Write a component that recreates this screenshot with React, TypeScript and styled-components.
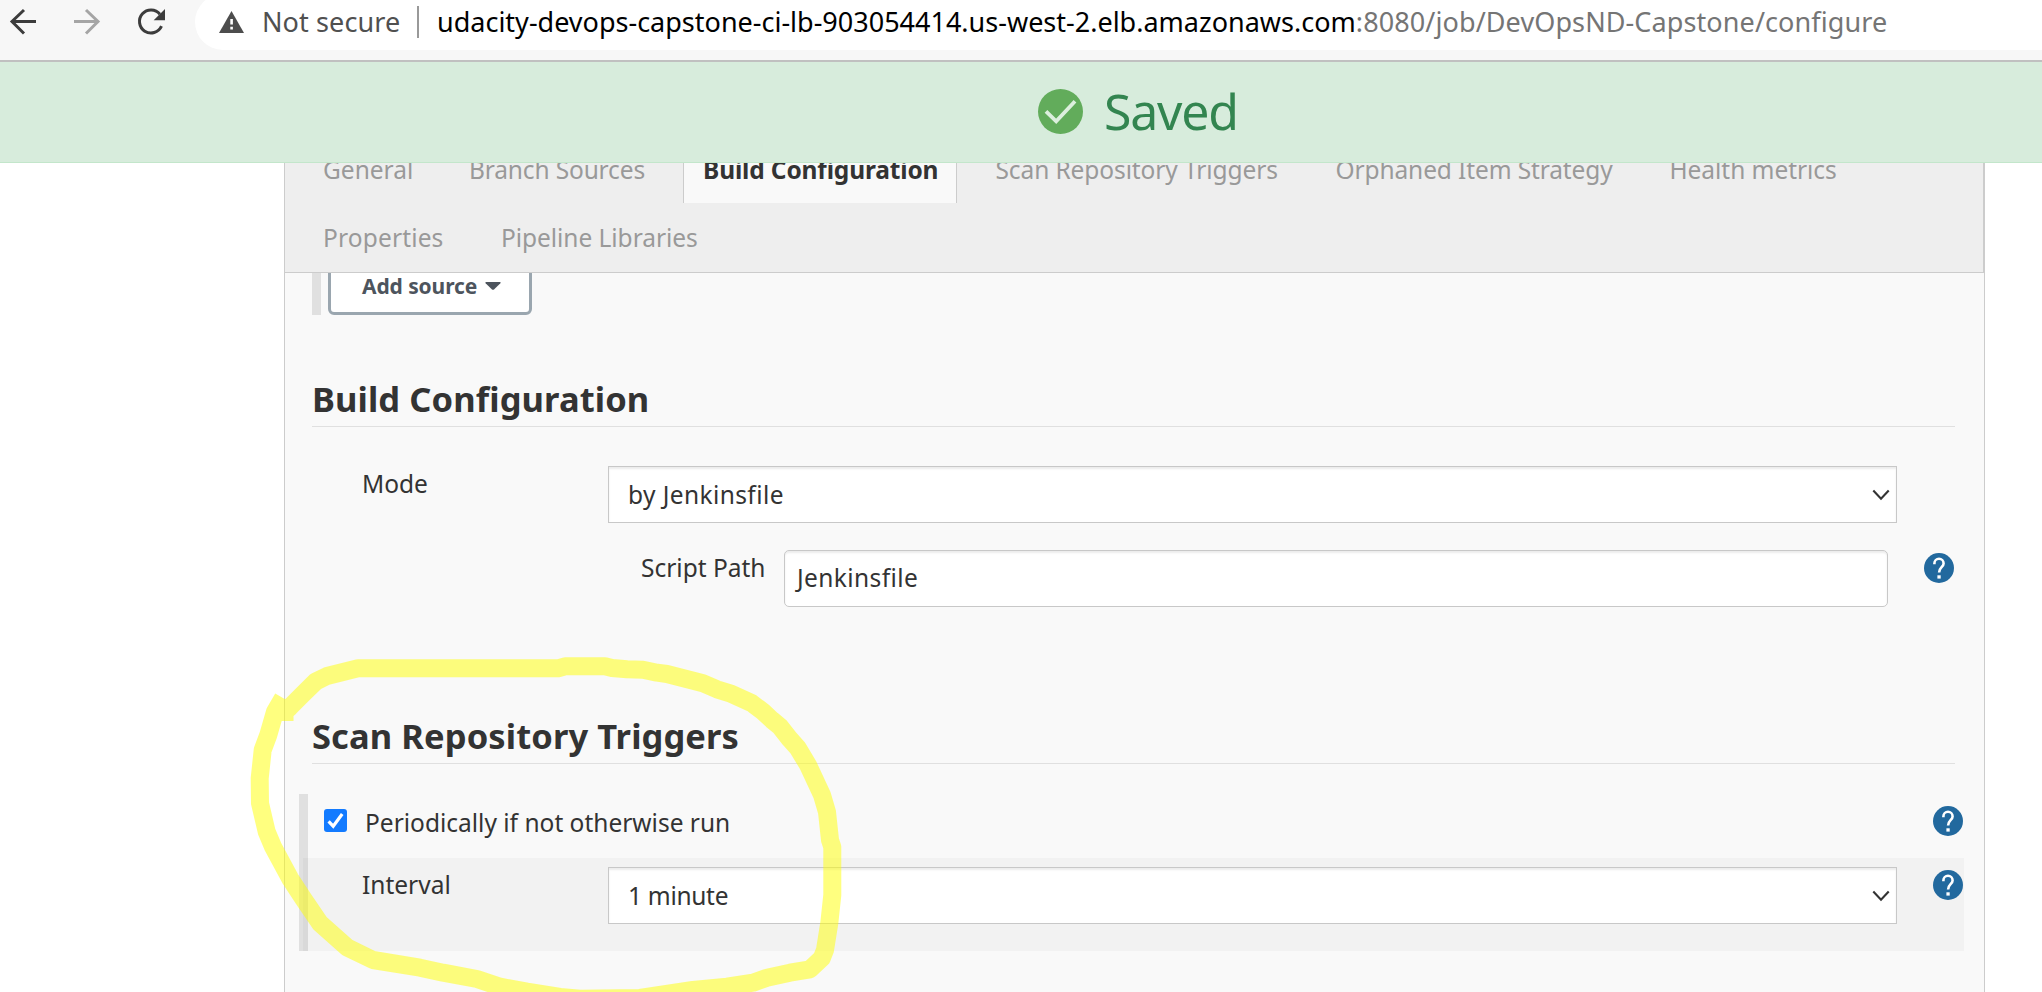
import React from "react";
import styled, { createGlobalStyle } from "styled-components";

const GlobalStyle = createGlobalStyle`
  *, *::before, *::after { box-sizing: border-box; }
  body {
    margin: 0;
    background: #fff;
    color: #333;
    font-family: "Noto Sans", "Open Sans", sans-serif;
    font-size: 24.5px;
    line-height: 30px;
    overflow: hidden;
  }
`;

const Page = styled.div`
  position: relative;
  display: flex;
  flex-direction: column;
  width: 2042px;
  height: 992px;
  overflow: hidden;
`;

/* Browser toolbar */

const Toolbar = styled.header`
  display: flex;
  flex: none;
  height: 62px;
  overflow: hidden;
  background: #f7f7f7;
  border-bottom: 2px solid #c0c0c0;
`;

const NavIcons = styled.div`
  width: 195px;
  flex: none;
`;

const AddressBar = styled.div`
  display: flex;
  flex: 1;
  align-items: center;
  height: 56px;
  margin-top: -6px;
  padding-left: 24px;
  border-radius: 28px 0 0 28px;
  background: #fff;
  font-size: 27px;
  white-space: nowrap;
`;

const Security = styled.span`
  width: 155px;
  margin-left: 18px;
  color: #505050;
  letter-spacing: 0.1px;
`;

const Separator = styled.span`
  width: 2px;
  height: 32px;
  margin-right: 18px;
  background: #999;
`;

const Host = styled.span`
  color: #000;
`;

const UrlPath = styled.span`
  color: #757575;
  letter-spacing: 0.1px;
`;

/* Notification */

const Banner = styled.div`
  z-index: 1;
  display: flex;
  flex: none;
  align-items: center;
  height: 101px;
  padding: 0 0 2px 1038px;
  background: #d7ecdc;
  border-bottom: 1px solid #c3e6cb;
`;

const BannerText = styled.span`
  margin: -1px 0 0 21px;
  color: #338550;
  font-size: 50px;
  line-height: 60px;
  letter-spacing: -1.2px;
`;

/* Configuration panel */

const Panel = styled.main`
  display: flex;
  flex: 1;
  flex-direction: column;
  width: 1701px;
  min-height: 0;
  margin-left: 284px;
  border: solid #ccc;
  border-width: 0 1px;
  background: #f9f9f9;
`;

const TabBar = styled.nav`
  flex: none;
  height: 138px;
  margin-top: -28px;
  padding-left: 18px;
  background: #eee;
  border: solid #ccc;
  border-width: 0 1px 1px 0;
`;

const TabRow = styled.div`
  display: flex;
  height: 68px;
  line-height: 70px;
`;

const Tab = styled.a<{ $width: number; $active?: boolean; $spacing?: number }>`
  flex: none;
  width: ${(p) => p.$width}px;
  height: 68px;
  margin-right: ${(p) => (p.$active ? 18.5 : 0)}px;
  padding-left: ${(p) => (p.$active ? 19 : 20)}px;
  border: solid #ccc;
  border-width: ${(p) => (p.$active ? "0 1px" : "0")};
  background: ${(p) => (p.$active ? "#f9f9f9" : "transparent")};
  color: ${(p) => (p.$active ? "#333" : "#999")};
  font-weight: ${(p) => (p.$active ? 700 : 400)};
  letter-spacing: ${(p) => p.$spacing ?? 0}px;
  white-space: nowrap;
`;

const Content = styled.div`
  padding: 0 29px 0 27px;
`;

const SourceRow = styled.div`
  display: flex;
  align-items: flex-end;
  height: 42px;
  overflow: hidden;
  border-left: 9px solid #e0e0e0;
`;

const AddButton = styled.button`
  display: flex;
  flex: none;
  align-items: center;
  gap: 8px;
  width: 204px;
  height: 60px;
  margin-left: 7px;
  padding: 1px 0 0 31px;
  border: 3px solid #9aa6af;
  border-radius: 6px;
  background: #fff;
  color: #4d545d;
  font-family: inherit;
  font-size: 21px;
  font-weight: 700;
  letter-spacing: -0.1px;
`;

const SectionTitle = styled.h2<{ $top: number }>`
  height: 51px;
  margin: ${(p) => p.$top}px 0 0;
  padding-top: 1px;
  border-bottom: 1px solid #e0e0e0;
  font-size: 34.5px;
  font-weight: 700;
  line-height: 44px;
  letter-spacing: 0.1px;
`;

const Row = styled.div<{ $top: number; $indent?: number }>`
  display: flex;
  align-items: flex-start;
  margin-top: ${(p) => p.$top}px;
  padding-left: ${(p) => p.$indent ?? 50}px;
`;

const Label = styled.label<{ $width: number }>`
  flex: none;
  width: ${(p) => p.$width}px;
  padding-top: 3px;
  white-space: nowrap;
`;

const Field = styled.div<{ $width: number; $rounded?: boolean; $spacing?: number }>`
  display: flex;
  flex: none;
  align-items: center;
  justify-content: space-between;
  width: ${(p) => p.$width}px;
  height: 57px;
  padding: ${(p) => (p.$rounded ? "0 0 1px 12px" : "1px 6px 0 19px")};
  border: 1px solid #c8c8c8;
  border-radius: ${(p) => (p.$rounded ? 5 : 0)}px;
  background: #fff;
  box-shadow: inset 0 2px 2px rgba(0, 0, 0, 0.075);
  letter-spacing: ${(p) => p.$spacing ?? 0.4}px;
`;

const Help = styled.svg<{ $left: number; $top?: number }>`
  flex: none;
  width: 30px;
  height: 30px;
  margin: ${(p) => p.$top ?? 3}px 0 0 ${(p) => p.$left}px;
`;

const TriggerBlock = styled.div`
  height: 157px;
  margin: 30px -9px 0 -13px;
  border-left: 9px solid #e0e0e0;
`;

const TriggerOption = styled.div`
  display: flex;
  align-items: flex-start;
  height: 64px;
  padding: 12px 1px 0 16px;
`;

const CheckBox = styled.span`
  display: flex;
  flex: none;
  width: 23px;
  height: 23px;
  margin-top: 3px;
  border-radius: 3px;
  background: #137bff;
`;

const OptionText = styled.span`
  flex: 1;
  margin: 2px 0 0 18px;
`;

const TriggerDetail = styled.div`
  display: flex;
  align-items: flex-start;
  height: 93px;
  margin-left: -5px;
  padding: 9px 1px 0 59px;
  background: rgba(0, 0, 0, 0.027);
`;

const Marker = styled.svg`
  position: absolute;
  top: 0;
  left: 0;
  pointer-events: none;
`;

const tabRows = [
  [
    { label: "General", width: 146 },
    { label: "Branch Sources", width: 234, spacing: -0.15 },
    { label: "Build Configuration", width: 274, active: true, spacing: -0.15 },
    { label: "Scan Repository Triggers", width: 340, spacing: -0.1 },
    { label: "Orphaned Item Strategy", width: 334, spacing: -0.12 },
    { label: "Health metrics", width: 204, spacing: -0.05 },
  ],
  [
    { label: "Properties", width: 178, spacing: 0.15 },
    { label: "Pipeline Libraries", width: 238, spacing: -0.05 },
  ],
];

const HelpIcon = ({ left, top }: { left: number; top?: number }) => (
  <Help $left={left} $top={top} viewBox="0 0 30 30">
    <circle cx="15" cy="15" r="15" fill="#22699e" />
    <path d="M10.4 11.2V10.4a4.6 4.6 0 0 1 9.2 0c0 3.7-4.5 4.1-4.5 9" fill="none" stroke="#fff" strokeWidth="2.6" />
    <rect x="13.4" y="22.3" width="3.3" height="3.3" fill="#fff" />
  </Help>
);

const Chevron = () => (
  <svg width="18" height="12" viewBox="0 0 18 12">
    <path d="M1.3 1.5 9 9.7l7.7-8.2" fill="none" stroke="#333" strokeWidth="2.1" />
  </svg>
);

const highlight =
  "M284.5 721V712L290 707L302 695L316 681.3L327 676L340 672.7L358 668.3H558L565 666.3H605L612 668L627 669.3" +
  "L643 669.7L657 672.7L667 674L703 683.3L717 689.3L730 693.3L752 703.3L763 711.7L772 720L780 726.7L790 739.3" +
  "L798 748.3L808 765L822 795L827 812L830 840L832.3 847V895L829.3 923L825 950L821.7 958.3L810 969.3L790 972.7" +
  "L767 977.7L753 982.7L727 986.7L693 990L640 998L580 998.7L560 997L527 991.7L500 986.7L477 979L443 972.7" +
  "L420 967.7L373 960L347 947.3L320 923.3L303 898.3L290 878.3L273 846.7L266.7 831.7L260 803.3L259.7 778.3" +
  "L262.7 750L268.3 735L275 711.7L283 698";

export default function App() {
  return (
    <>
      <GlobalStyle />
      <Page>
        <Toolbar>
          <NavIcons>
            <svg width="195" height="60" fill="none" stroke="#3c3c3c" strokeWidth="3">
              <path d="M36 21.5H12M24 10 12 21.5l12 12" />
              <path d="M74 21.5h24M86 10l12 11.5-12 12" stroke="#a5a5a5" />
              <path d="M161.5 26.2a11.5 11.5 0 1 1-1.6-12" />
              <path d="M165 9v11.3h-11.3z" fill="#3c3c3c" stroke="none" />
            </svg>
          </NavIcons>
          <AddressBar>
            <svg width="25" height="22" viewBox="0 0 25 22">
              <path d="M12.5 0 25 22H0z" fill="#4d4d4d" />
              <path d="M11.3 8h2.6v5.4h-2.6zM11.3 15.7h2.6v2.8h-2.6z" fill="#fff" />
            </svg>
            <Security>Not secure</Security>
            <Separator />
            <Host>udacity-devops-capstone-ci-lb-903054414.us-west-2.elb.amazonaws.com</Host>
            <UrlPath>:8080/job/DevOpsND-Capstone/configure</UrlPath>
          </AddressBar>
        </Toolbar>

        <Banner>
          <svg width="45" height="45" viewBox="0 0 45 45">
            <circle cx="22.5" cy="22.5" r="22.5" fill="#62ac5b" />
            <path d="M8 22.3l10.2 10L37 12.2" fill="none" stroke="#dcefdd" strokeWidth="3.8" />
          </svg>
          <BannerText>Saved</BannerText>
        </Banner>

        <Panel>
          <TabBar>
            {tabRows.map((row, i) => (
              <TabRow key={i}>
                {row.map((tab) => (
                  <Tab
                    key={tab.label}
                    $width={tab.width}
                    $active={"active" in tab}
                    $spacing={"spacing" in tab ? tab.spacing : 0}
                  >
                    {tab.label}
                  </Tab>
                ))}
              </TabRow>
            ))}
          </TabBar>

          <Content>
            <SourceRow>
              <AddButton>
                Add source
                <svg width="16" height="8" viewBox="0 0 16 8">
                  <path d="M1 0h14q1 .4.4 1.2L9 7.4q-1 .8-2 0L.6 1.2Q0 .4 1 0z" fill="#4d545d" />
                </svg>
              </AddButton>
            </SourceRow>

            <SectionTitle $top={61}>Build Configuration</SectionTitle>
            <Row $top={39}>
              <Label $width={246}>Mode</Label>
              <Field $width={1289}>
                by Jenkinsfile
                <Chevron />
              </Field>
            </Row>
            <Row $top={27} $indent={329}>
              <Label $width={143}>Script Path</Label>
              <Field $width={1104} $rounded>
                Jenkinsfile
              </Field>
              <HelpIcon left={36} />
            </Row>

            <SectionTitle $top={106}>Scan Repository Triggers</SectionTitle>
            <TriggerBlock>
              <TriggerOption>
                <CheckBox>
                  <svg width="23" height="23" viewBox="0 0 23 23">
                    <path d="M4.6 12.4l4.6 4.8L18.2 5" fill="none" stroke="#fff" strokeWidth="3.2" />
                  </svg>
                </CheckBox>
                <OptionText>Periodically if not otherwise run</OptionText>
                <HelpIcon left={0} top={0} />
              </TriggerOption>
              <TriggerDetail>
                <Label $width={246}>Interval</Label>
                <Field $width={1289} $spacing={-0.3}>
                  1 minute
                  <Chevron />
                </Field>
                <HelpIcon left={36} />
              </TriggerDetail>
            </TriggerBlock>
          </Content>
        </Panel>

        <Marker width="2042" height="992">
          <path d={highlight} fill="none" stroke="#ffff00" strokeOpacity="0.5" strokeWidth="18" strokeLinejoin="round" />
        </Marker>
      </Page>
    </>
  );
}
